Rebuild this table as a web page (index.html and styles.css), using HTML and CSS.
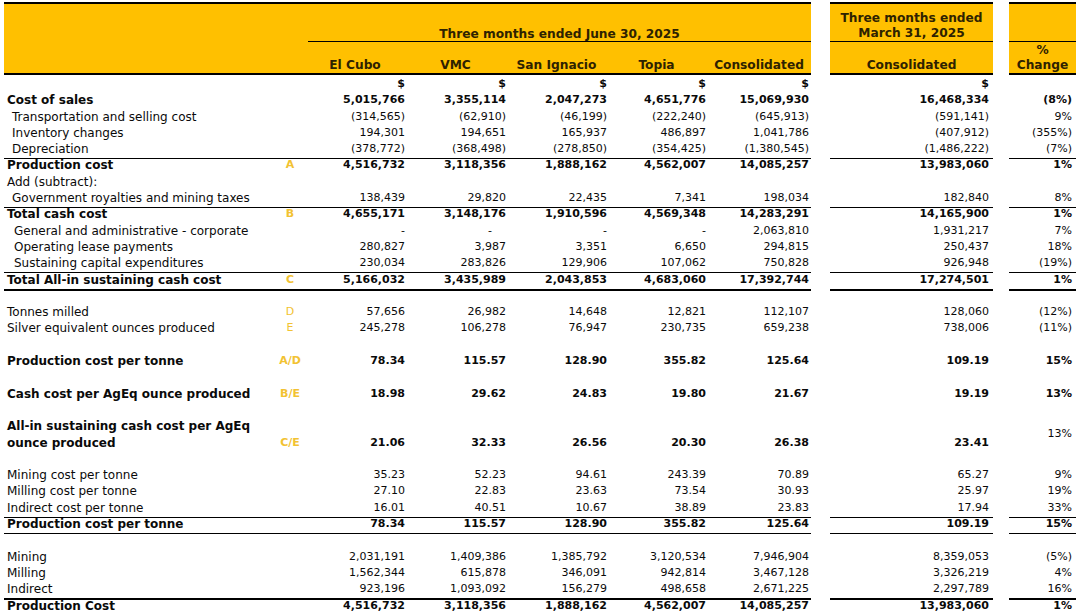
FILE: index.html
```html
<!DOCTYPE html>
<html lang="en">
<head>
<meta charset="utf-8">
<title>Production cost reconciliation</title>
<link rel="stylesheet" href="styles.css">
</head>
<body>
<div class="sheet">
  <div class="hdr">
    <div class="blk blk-main">
      <div class="top-main">
        <div class="period">Three months ended June 30, 2025</div>
      </div>
      <div class="cols-main">
        <div class="sp"></div>
        <div class="ch">El Cubo</div>
        <div class="ch">VMC</div>
        <div class="ch">San Ignacio</div>
        <div class="ch">Topia</div>
        <div class="ch">Consolidated</div>
      </div>
    </div>
    <div class="gap"></div>
    <div class="blk">
      <div class="top-side">Three months ended<br>March 31, 2025</div>
      <div class="bot-side">Consolidated</div>
    </div>
    <div class="gap"></div>
    <div class="blk">
      <div class="top-side"></div>
      <div class="bot-side">%<br>Change</div>
    </div>
  </div>

  <div class="body">
    <div class="row b"><div></div><div></div><div class="n">$</div><div class="n">$</div><div class="n">$</div><div class="n">$</div><div class="n">$</div><div></div><div class="n">$</div><div></div><div class="n"></div></div>
    <div class="row b"><div class="l">Cost of sales</div><div class="k"></div><div class="n">5,015,766</div><div class="n">3,355,114</div><div class="n">2,047,273</div><div class="n">4,651,776</div><div class="n">15,069,930</div><div></div><div class="n">16,468,334</div><div></div><div class="n">(8%)</div></div>
    <div class="row"><div class="l in">Transportation and selling cost</div><div class="k"></div><div class="n">(314,565)</div><div class="n">(62,910)</div><div class="n">(46,199)</div><div class="n">(222,240)</div><div class="n">(645,913)</div><div></div><div class="n">(591,141)</div><div></div><div class="n">9%</div></div>
    <div class="row"><div class="l in">Inventory changes</div><div class="k"></div><div class="n">194,301</div><div class="n">194,651</div><div class="n">165,937</div><div class="n">486,897</div><div class="n">1,041,786</div><div></div><div class="n">(407,912)</div><div></div><div class="n">(355%)</div></div>
    <div class="row ul"><div class="l in">Depreciation</div><div class="k"></div><div class="n">(378,772)</div><div class="n">(368,498)</div><div class="n">(278,850)</div><div class="n">(354,425)</div><div class="n">(1,380,545)</div><div></div><div class="n">(1,486,222)</div><div></div><div class="n">(7%)</div></div>
    <div class="row b"><div class="l">Production cost</div><div class="k">A</div><div class="n">4,516,732</div><div class="n">3,118,356</div><div class="n">1,888,162</div><div class="n">4,562,007</div><div class="n">14,085,257</div><div></div><div class="n">13,983,060</div><div></div><div class="n">1%</div></div>
    <div class="row"><div class="l">Add (subtract):</div><div class="k"></div><div class="n"></div><div class="n"></div><div class="n"></div><div class="n"></div><div class="n"></div><div></div><div class="n"></div><div></div><div class="n"></div></div>
    <div class="row ul"><div class="l in">Government royalties and mining taxes</div><div class="k"></div><div class="n">138,439</div><div class="n">29,820</div><div class="n">22,435</div><div class="n">7,341</div><div class="n">198,034</div><div></div><div class="n">182,840</div><div></div><div class="n">8%</div></div>
    <div class="row b"><div class="l">Total cash cost</div><div class="k">B</div><div class="n">4,655,171</div><div class="n">3,148,176</div><div class="n">1,910,596</div><div class="n">4,569,348</div><div class="n">14,283,291</div><div></div><div class="n">14,165,900</div><div></div><div class="n">1%</div></div>
    <div class="row"><div class="l in2">General and administrative - corporate</div><div class="k"></div><div class="n dash">-</div><div class="n dash">-</div><div class="n dash">-</div><div class="n dash">-</div><div class="n">2,063,810</div><div></div><div class="n">1,931,217</div><div></div><div class="n">7%</div></div>
    <div class="row"><div class="l in2">Operating lease payments</div><div class="k"></div><div class="n">280,827</div><div class="n">3,987</div><div class="n">3,351</div><div class="n">6,650</div><div class="n">294,815</div><div></div><div class="n">250,437</div><div></div><div class="n">18%</div></div>
    <div class="row ul"><div class="l in2">Sustaining capital expenditures</div><div class="k"></div><div class="n">230,034</div><div class="n">283,826</div><div class="n">129,906</div><div class="n">107,062</div><div class="n">750,828</div><div></div><div class="n">926,948</div><div></div><div class="n">(19%)</div></div>
    <div class="row b ulx"><div class="l">Total All-in sustaining cash cost</div><div class="k">C</div><div class="n">5,166,032</div><div class="n">3,435,989</div><div class="n">2,043,853</div><div class="n">4,683,060</div><div class="n">17,392,744</div><div></div><div class="n">17,274,501</div><div></div><div class="n">1%</div></div>
    <div class="row"></div>
    <div class="row"><div class="l">Tonnes milled</div><div class="k">D</div><div class="n">57,656</div><div class="n">26,982</div><div class="n">14,648</div><div class="n">12,821</div><div class="n">112,107</div><div></div><div class="n">128,060</div><div></div><div class="n">(12%)</div></div>
    <div class="row"><div class="l">Silver equivalent ounces produced</div><div class="k">E</div><div class="n">245,278</div><div class="n">106,278</div><div class="n">76,947</div><div class="n">230,735</div><div class="n">659,238</div><div></div><div class="n">738,006</div><div></div><div class="n">(11%)</div></div>
    <div class="row"></div>
    <div class="row b"><div class="l">Production cost per tonne</div><div class="k">A/D</div><div class="n">78.34</div><div class="n">115.57</div><div class="n">128.90</div><div class="n">355.82</div><div class="n">125.64</div><div></div><div class="n">109.19</div><div></div><div class="n">15%</div></div>
    <div class="row"></div>
    <div class="row b"><div class="l">Cash cost per AgEq ounce produced</div><div class="k">B/E</div><div class="n">18.98</div><div class="n">29.62</div><div class="n">24.83</div><div class="n">19.80</div><div class="n">21.67</div><div></div><div class="n">19.19</div><div></div><div class="n">13%</div></div>
    <div class="row"></div>
    <div class="row2 b">
      <div class="l l2">All-in sustaining cash cost per AgEq<br>ounce produced</div><div class="k k2">C/E</div><div class="n n2">21.06</div><div class="n n2">32.33</div><div class="n n2">26.56</div><div class="n n2">20.30</div><div class="n n2">26.38</div><div></div><div class="n n2">23.41</div><div></div><div class="n mid">13%</div>
    </div>
    <div class="row"></div>
    <div class="row"><div class="l">Mining cost per tonne</div><div class="k"></div><div class="n">35.23</div><div class="n">52.23</div><div class="n">94.61</div><div class="n">243.39</div><div class="n">70.89</div><div></div><div class="n">65.27</div><div></div><div class="n">9%</div></div>
    <div class="row"><div class="l">Milling cost per tonne</div><div class="k"></div><div class="n">27.10</div><div class="n">22.83</div><div class="n">23.63</div><div class="n">73.54</div><div class="n">30.93</div><div></div><div class="n">25.97</div><div></div><div class="n">19%</div></div>
    <div class="row ul"><div class="l">Indirect cost per tonne</div><div class="k"></div><div class="n">16.01</div><div class="n">40.51</div><div class="n">10.67</div><div class="n">38.89</div><div class="n">23.83</div><div></div><div class="n">17.94</div><div></div><div class="n">33%</div></div>
    <div class="row b ul"><div class="l">Production cost per tonne</div><div class="k"></div><div class="n">78.34</div><div class="n">115.57</div><div class="n">128.90</div><div class="n">355.82</div><div class="n">125.64</div><div></div><div class="n">109.19</div><div></div><div class="n">15%</div></div>
    <div class="row"></div>
    <div class="row"><div class="l">Mining</div><div class="k"></div><div class="n">2,031,191</div><div class="n">1,409,386</div><div class="n">1,385,792</div><div class="n">3,120,534</div><div class="n">7,946,904</div><div></div><div class="n">8,359,053</div><div></div><div class="n">(5%)</div></div>
    <div class="row"><div class="l">Milling</div><div class="k"></div><div class="n">1,562,344</div><div class="n">615,878</div><div class="n">346,091</div><div class="n">942,814</div><div class="n">3,467,128</div><div></div><div class="n">3,326,219</div><div></div><div class="n">4%</div></div>
    <div class="row ulx"><div class="l">Indirect</div><div class="k"></div><div class="n">923,196</div><div class="n">1,093,092</div><div class="n">156,279</div><div class="n">498,658</div><div class="n">2,671,225</div><div></div><div class="n">2,297,789</div><div></div><div class="n">16%</div></div>
    <div class="row b ul"><div class="l">Production Cost</div><div class="k"></div><div class="n">4,516,732</div><div class="n">3,118,356</div><div class="n">1,888,162</div><div class="n">4,562,007</div><div class="n">14,085,257</div><div></div><div class="n">13,983,060</div><div></div><div class="n">1%</div></div>
  </div>
</div>
</body>
</html>
```

FILE: styles.css
```css
* { box-sizing: border-box; }

html, body {
  margin: 0;
  padding: 0;
  background: #ffffff;
}

body {
  font-family: "DejaVu Sans", Verdana, sans-serif;
  font-size: 11px;
  color: #0a0a0a;
}

.sheet {
  width: 1080px;
  padding: 2px 4px 0 4px;
}

/* ---------- header ---------- */
.hdr {
  display: grid;
  grid-template-columns: 807px 19px 163px 16px 67px;
  height: 73px;
}

.blk {
  background: #ffc000;
  border-top: 2px solid #000;
  border-bottom: 2px solid #000;
  display: flex;
  flex-direction: column;
  color: #2e2200;
  font-weight: bold;
  font-size: 12.2px;
  line-height: 15px;
  text-align: center;
}

.top-main {
  height: 38px;
  display: flex;
  align-items: flex-end;
  padding-left: 304px;
}

.period {
  flex: 1;
  border-bottom: 1px solid #000;
  line-height: 13px;
}

.cols-main {
  flex: 1;
  display: grid;
  grid-template-columns: 301px 100px 101px 101px 99px 106px;
  align-items: end;
}

.ch { text-align: center; }

.top-side {
  height: 38px;
  border-bottom: 1px solid #000;
  padding-top: 7px;
}

.bot-side {
  flex: 1;
  display: flex;
  flex-direction: column;
  justify-content: flex-end;
}

/* ---------- body ---------- */
.row, .row2 {
  display: grid;
  grid-template-columns: 271px 30px 100px 101px 101px 99px 105px 19px 163px 16px 67px;
  white-space: nowrap;
}

.row {
  height: 16.3px;
  line-height: 18px;
}

.row2 {
  height: 32.6px;
  line-height: 16.3px;
  padding-top: 1px;
}

.b > div { font-weight: bold; }

.l {
  padding-left: 3px;
  font-size: 12px;
}
.l.in { padding-left: 8px; }
.l.in2 { padding-left: 10px; }

.k {
  text-align: center;
  color: #f2c232;
}

.n {
  text-align: right;
  padding-right: 4px;
}

.row > .n:nth-child(3), .row2 > .n:nth-child(3) { padding-right: 0; }
.row > .n:nth-child(4), .row2 > .n:nth-child(4) { padding-right: 0; }
.row > .n:nth-child(5), .row2 > .n:nth-child(5) { padding-right: 0; }
.row > .n:nth-child(6), .row2 > .n:nth-child(6) { padding-right: 0; }
.row > .n:nth-child(7), .row2 > .n:nth-child(7) { padding-right: 2px; }

.n.dash { padding-right: 14px; }
.row > .n:nth-child(4).dash { padding-right: 14px; }

.k2, .n2 { align-self: end; }
.mid {
  align-self: center;
  font-weight: normal !important;
}

.ul > div:not(:nth-child(8)):not(:nth-child(10)) {
  border-bottom: 1px solid #000;
}

.ulx > div:not(:nth-child(8)):not(:nth-child(10)) {
  border-bottom: 2px solid #000;
}
```
